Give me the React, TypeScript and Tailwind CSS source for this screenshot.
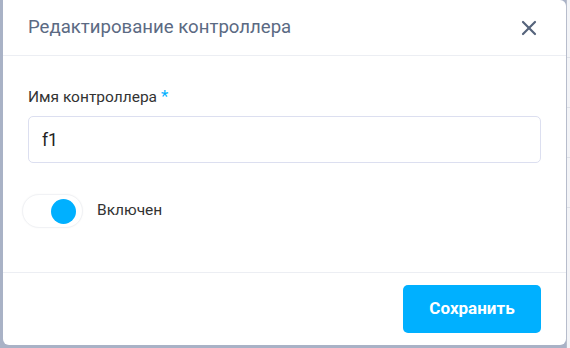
import React, { useState } from 'react';
import { X } from 'lucide-react';

const App: React.FC = () => {
  const [name, setName] = useState('f1');
  const [enabled, setEnabled] = useState(true);

  return (
    <div className="w-[570px] h-[348px] flex bg-[#a9b2c6] overflow-hidden font-['Roboto',sans-serif]">
      {/* Overlay strip on the left */}
      <div className="w-[3px] shrink-0" />

      {/* Modal */}
      <div className="w-[563px] h-[345px] shrink-0 bg-white rounded-b-md rounded-tr-md flex flex-col">
        {/* Header */}
        <div className="h-[56px] shrink-0 border-b border-[#eceef3] flex items-center justify-between pl-[25px] pr-[25px]">
          <h2 className="text-[18.6px] text-[#5b6a83]">Редактирование контроллера</h2>
          <button className="text-[#56647c] flex items-center justify-center">
            <X size={24} strokeWidth={2.2} />
          </button>
        </div>

        {/* Body */}
        <div className="flex-1 flex flex-col pl-[25px] pr-[25px] pt-[31px]">
          <label className="text-[15.5px] text-[#333] leading-5 mb-[9px]">
            Имя контроллера <span className="text-[#00b0ff] text-[17px] leading-none">*</span>
          </label>
          <input
            value={name}
            onChange={(e) => setName(e.target.value)}
            className="h-[47px] w-full border border-[#dcdff0] rounded-[5px] px-[13px] text-[17.5px] text-[#222] outline-none"
          />

          <div className="flex items-center mt-[31px] -ml-[6px]">
            <button
              onClick={() => setEnabled(!enabled)}
              className="w-[61px] h-[34px] rounded-full bg-white border border-[#f1f2f5] shadow-[0_0_2px_rgba(0,0,0,0.04)] flex items-center pr-[6px] justify-end"
            >
              <span className={`w-[25px] h-[25px] rounded-full ${enabled ? 'bg-[#00b0ff]' : 'bg-gray-300'}`} />
            </button>
            <span className="ml-[14px] text-[15.5px] text-[#333]">Включен</span>
          </div>
        </div>

        {/* Footer */}
        <div className="h-[73px] shrink-0 border-t border-[#eceef3] flex items-start justify-end pt-[12px] pr-[25px]">
          <button className="w-[138px] h-[48px] rounded-[5px] bg-[#00b0ff] text-white text-[17px] font-bold">
            Сохранить
          </button>
        </div>
      </div>

      {/* Page behind, on the right */}
      <div className="flex-1 bg-[#f3f4f7] border-l border-[#b7bdcc] flex flex-col">
        <div className="h-[58px] border-b border-[#dfe2e8]" />
        <div className="h-[50px] border-b border-[#dfe2e8]" />
        <div className="h-[50px] border-b border-[#dfe2e8]" />
        <div className="h-[50px] border-b border-[#dfe2e8]" />
      </div>
    </div>
  );
};

export default App;
